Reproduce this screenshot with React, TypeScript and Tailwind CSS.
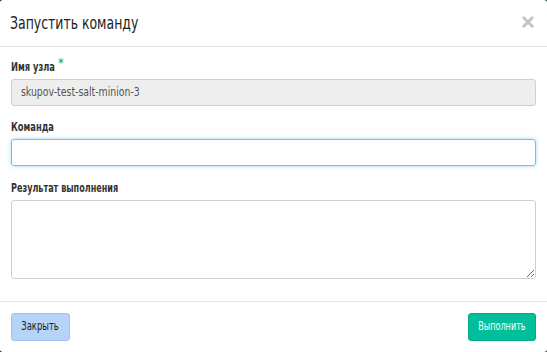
export default function App() {
  const font = { fontFamily: '"DejaVu Sans Condensed", "Liberation Sans", sans-serif' }
  return (
    <div className="w-[547px] h-[352px] bg-[#1c3a38]" style={font}>
      <div className="w-full h-full bg-white rounded-[3px] flex flex-col">
        <div className="h-[47px] border-b border-[#e5e5e5] flex items-center justify-between pl-[10px] pr-[13px]">
          <h4 className="text-[18px] text-[#222] leading-none">
            <span className="inline-block origin-left scale-x-[0.77] whitespace-nowrap">Запустить команду</span>
          </h4>
          <svg width="12" height="12" viewBox="0 0 12 12" className="mb-[2px]">
            <path d="M2 2 L10 10 M10 2 L2 10" stroke="#c4c4c4" strokeWidth="3" strokeLinecap="square" />
          </svg>
        </div>
        <div className="flex-1 px-[11px] pt-[13px] border-b border-[#e5e5e5]">
          <div className="flex items-start h-[14px]">
            <label className="w-[46px] text-[12px] font-bold text-[#333] leading-[14px] whitespace-nowrap">
              <span className="inline-block origin-left scale-x-[0.77]">Имя узла</span>
            </label>
            <span className="text-[#1abc9c] text-[12px] leading-[8px] ml-[1px] -mt-[1px] font-bold">*</span>
          </div>
          <div className="mt-[5px] h-[27px] rounded-[3px] border border-[#cfcfcf] bg-[#eeeeee] flex items-center px-[9px] text-[12.5px] text-[#555]">
            <span className="inline-block origin-left scale-x-[0.83] whitespace-nowrap">skupov-test-salt-minion-3</span>
          </div>
          <label className="block mt-[14px] text-[12px] font-bold text-[#333] leading-[14px] whitespace-nowrap">
            <span className="inline-block origin-left scale-x-[0.77]">Команда</span>
          </label>
          <input
            className="mt-[5px] w-full h-[27px] rounded-[3px] border border-[#66c4f2] outline-none shadow-[0_0_4px_rgba(102,196,242,0.6)] px-[9px] text-[12.5px]"
            style={font}
          />
          <label className="block mt-[15px] text-[12px] font-bold text-[#333] leading-[14px] whitespace-nowrap">
            <span className="inline-block origin-left scale-x-[0.75]">Результат выполнения</span>
          </label>
          <textarea
            className="block mt-[5px] w-full h-[79px] rounded-[3px] border border-[#cfcfcf] outline-none px-[9px] text-[12.5px]"
            style={font}
          />
        </div>
        <div className="h-[50px] flex items-center justify-between px-[11px] pb-[1px]">
          <button className="w-[59px] h-[28px] rounded-[3px] bg-[#b6d3f8] border border-[#9ec2f2] text-[12.5px] text-[#222] flex items-center justify-center whitespace-nowrap">
            <span className="inline-block scale-x-[0.75]">Закрыть</span>
          </button>
          <button className="w-[68px] h-[28px] rounded-[3px] bg-[#00bf9a] border border-[#00ab8a] text-[12.5px] text-white flex items-center justify-center whitespace-nowrap">
            <span className="inline-block scale-x-[0.72]">Выполнить</span>
          </button>
        </div>
      </div>
    </div>
  )
}
